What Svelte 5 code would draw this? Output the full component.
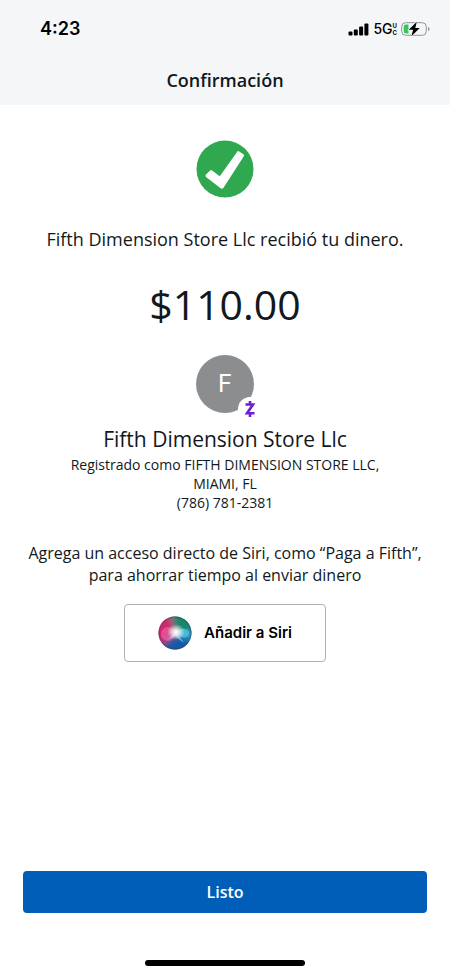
<script>
  const recipient = 'Fifth Dimension Store Llc';
  const amount = '$110.00';
  const bars = [4, 6, 9, 12];
</script>

<div class="screen">
  <header>
    <div class="status">
      <time>4:23</time>
      <div class="indicators">
        <svg width="21" height="13" viewBox="0 0 21 13" aria-hidden="true">
          {#each bars as height, i}
            <rect x={0.5 + i * 5.3} y={12.5 - height} width="4" {height} rx="1" />
          {/each}
        </svg>
        <span class="network">5G<span class="uc"><span>U</span><span>C</span></span></span>
        <svg width="29" height="16" viewBox="0 0 29 16" aria-hidden="true">
          <rect x=".7" y="1.7" width="24.6" height="12.6" rx="4" fill="none" stroke="#929496" stroke-width="1" />
          <path d="M5 3.5h2.5v9H5a2.3 2.3 0 0 1-2.3-2.3V5.8A2.3 2.3 0 0 1 5 3.5Z" fill="#36c75a" />
          <path d="M27 6c2 .6 2 3.4 0 4Z" fill="#929496" />
          <path d="m15.8.8-8.1 8h4.4l-1.7 6.5 8.4-8.4h-4.5Z" stroke="#f5f6f8" stroke-width="1.2" paint-order="stroke" />
        </svg>
      </div>
    </div>
    <h1>Confirmación</h1>
  </header>

  <main>
    <svg class="check" width="58" height="58" viewBox="0 0 58 58" role="img" aria-label="Completado">
      <circle cx="29" cy="29" r="28.5" fill="#2fa84f" />
      <path d="M10 34.5 14.2 30.4Q15 29.7 16 30.4L23.8 36.2 41.2 11.8Q42 10.6 43.2 11.4L47.4 14.3Q48.6 15.1 47.8 16.3L27.5 47.8Q26.3 49.5 24.6 48.3L10 37Q8.8 35.8 10 34.5Z" fill="#fff" />
    </svg>
    <p class="message">{recipient} recibió tu dinero.</p>
    <p class="amount">{amount}</p>
    <div class="avatar">
      F
      <span class="badge">
        <svg width="12" height="18" viewBox="0 0 12 18" role="img" aria-label="Zelle">
          <path d="M1.5 4.5H9L3 13.3H10.5M6 1V4.5M6 13.3V17" fill="none" stroke="#6d1ed4" stroke-width="2.6" />
        </svg>
      </span>
    </div>
    <h2>{recipient}</h2>
    <address>
      Registrado como FIFTH DIMENSION STORE LLC,<br />MIAMI, FL<br />(786) 781-2381
    </address>
    <p class="hint">Agrega un acceso directo de Siri, como “Paga a Fifth”, para ahorrar tiempo al enviar dinero</p>
    <button class="siri" type="button">
      <svg width="34" height="34" viewBox="0 0 34 34" aria-hidden="true">
        <defs>
          <clipPath id="orb"><circle cx="17" cy="17" r="16.5" /></clipPath>
          <filter id="soft" x="-50%" y="-50%" width="200%" height="200%"><feGaussianBlur stdDeviation="3" /></filter>
          <radialGradient id="glow">
            <stop offset="0" stop-color="#fff" />
            <stop offset=".3" stop-color="#fff" stop-opacity=".8" />
            <stop offset="1" stop-color="#fff" stop-opacity="0" />
          </radialGradient>
        </defs>
        <g clip-path="url(#orb)">
          <rect width="34" height="34" fill="#555579" />
          <g filter="url(#soft)">
            <path d="M-4 4 12-2 16 18 8 31-4 30Z" fill="#d32670" />
            <path d="M11-4H38V15L18 16Z" fill="#16866c" />
            <path d="M18 16 38 14V25L22 25Z" fill="#259fcd" />
            <path d="M4 28 17 19 35 25 26 39H8Z" fill="#1859a6" />
          </g>
          <circle cx="10" cy="18" r="7" fill="#f78fc0" opacity=".4" />
          <path d="M17 17C21 12 31 11 31 17S22 23 17 17" fill="#76dcee" opacity=".5" />
          <path d="M17 17Q22 20 26 27L17 20 9 24Z" fill="#fff" opacity=".4" />
          <ellipse cx="18" cy="16" rx="9" ry="8" fill="url(#glow)" />
          <circle cx="17" cy="17" r="16" fill="none" stroke="#35415f" stroke-opacity=".45" />
        </g>
      </svg>
      Añadir a Siri
    </button>
  </main>

  <footer>
    <button class="done" type="button">Listo</button>
    <div class="home"></div>
  </footer>
</div>

<style>
  :global(body) { margin: 0; background: #fff; }
  .screen {
    min-height: 100vh;
    display: flex;
    flex-direction: column;
    color: #111820;
    font-family: "Open Sans", "Noto Sans", sans-serif;
  }
  header { background: #f5f6f8; padding: 16px 20px 13px 40px; }
  .status { display: flex; align-items: center; justify-content: space-between; height: 26px; color: #000; }
  time { font: 600 18px/26px Inter, sans-serif; }
  .indicators { display: flex; align-items: center; gap: 4px; }
  .network { display: flex; align-items: center; font: 500 14px/16px Inter, sans-serif; }
  .uc { display: grid; font-size: 6px; line-height: 7px; font-weight: 700; }
  h1, h2, p { margin: 0; font-weight: 400; }
  h1 { margin: 26px 20px 0 0; text-align: center; font-size: 18px; line-height: 24px; font-weight: 600; }
  main {
    flex: 1;
    display: flex;
    flex-direction: column;
    align-items: center;
    padding: 35px 20px 24px;
    text-align: center;
  }
  main > * { flex-shrink: 0; }
  .message { margin-top: 29px; font-size: 18px; line-height: 24px; }
  .amount { margin-top: 24px; font-size: 41px; line-height: 58px; }
  .avatar {
    position: relative;
    width: 58px;
    height: 58px;
    margin-top: 22px;
    border-radius: 50%;
    background: #8b8d8f;
    color: #fff;
    font: 400 24px/58px Inter, sans-serif;
  }
  .badge {
    position: absolute;
    right: -8px;
    bottom: -8px;
    display: flex;
    align-items: center;
    justify-content: center;
    width: 24px;
    height: 24px;
    border-radius: 50%;
    background: #fff;
  }
  h2 { margin-top: 12px; font-size: 21px; line-height: 28px; }
  address { margin-top: 2px; font-size: 14px; line-height: 19px; font-style: normal; }
  .hint { margin-top: 30px; font-size: 16px; line-height: 22px; }
  button { font: inherit; cursor: pointer; }
  .siri {
    display: flex;
    align-items: center;
    justify-content: center;
    gap: 12px;
    min-width: 202px;
    height: 58px;
    margin-top: 18px;
    padding: 0 32px;
    border: 1px solid #adafb1;
    border-radius: 4px;
    background: #fff;
    color: #000;
    font: 600 15px/20px Inter, sans-serif;
  }
  footer { display: flex; flex-direction: column; align-items: center; padding: 0 23px 9px; }
  .done {
    width: 100%;
    height: 42px;
    padding: 0;
    border: 0;
    border-radius: 4px;
    background: #005eb8;
    color: #fff;
    font-size: 16px;
    font-weight: 600;
  }
  .home { width: 160px; height: 6px; margin-top: 47px; border-radius: 3px; background: #000; }
</style>
